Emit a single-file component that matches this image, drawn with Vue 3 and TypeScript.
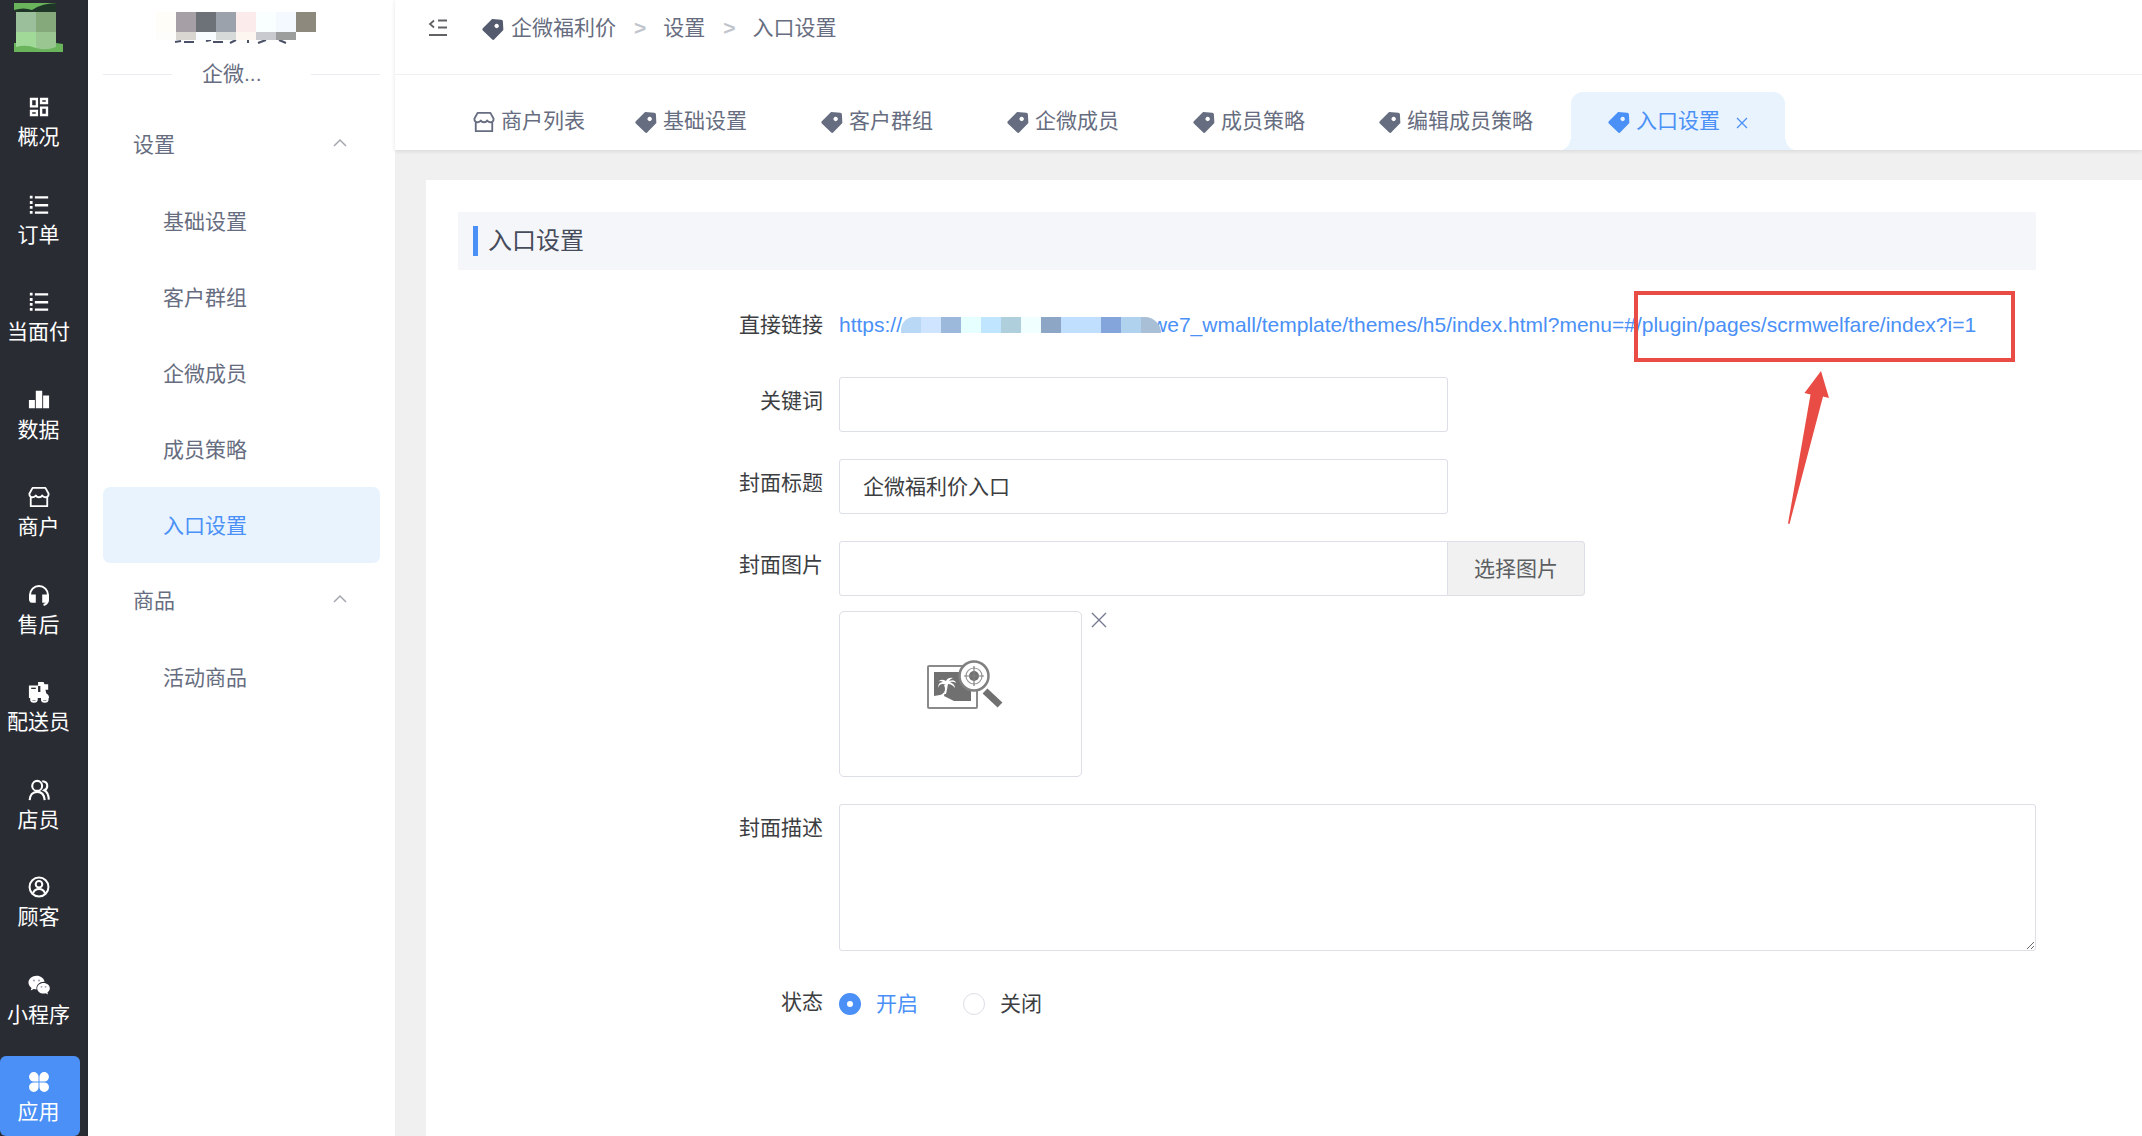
<script setup lang="ts">
import { ref } from 'vue'

type IconName =
  | 'grid' | 'list' | 'bars' | 'shop' | 'headset' | 'rider'
  | 'staff' | 'customer' | 'wechat' | 'apps' | 'tag'

const icons: Record<IconName, string> = {
  grid: '<g fill="none" stroke="currentColor" stroke-width="2.6"><path d="M3.3 3.3h6.4v8H3.3zM14.3 3.3h6.4v4.4h-6.4zM3.3 16.3h6.4v4.4H3.3zM14.3 12.7h6.4v8h-6.4z"/></g>',
  list: '<g fill="currentColor"><path d="M2 2h3v3H2zM2 7.500h3v3.500H2zM2 13h3v3H2zM2 18.500h3v3H2zM7.500 2.500H22V5H7.500zM7.500 11H22v2.500H7.500zM7.500 19H22v2.500H7.500z"/></g>',
  bars: '<g fill="currentColor"><path d="M1 12h6.500v9H1zM8.500 2h7v19h-7zM16.500 7H23v14h-6.500z"/></g>',
  shop: '<g fill="none" stroke="currentColor" stroke-width="2" stroke-linejoin="round"><path d="M5 2h14l3.500 6.500c0 2.500-1.500 3.800-3.600 3.800-1.700 0-2.800-.8-3.400-2-.7 1.200-1.900 2-3.500 2s-2.800-.8-3.500-2c-.6 1.200-1.700 2-3.400 2-2.100 0-3.600-1.300-3.600-3.800zM3 12v10h18V12"/></g>',
  headset: '<path d="M2.200 18v-6a9.800 9.800 0 0 1 19.600 0v5c0 3-1.500 5-4.800 6" fill="none" stroke="currentColor" stroke-width="2.200"/><path d="M1.500 11.500h7v9H4a2.500 2.500 0 0 1-2.500-2.500zM15.500 11.500h7V18a2.500 2.500 0 0 1-2.500 2.500h-4.500z" fill="currentColor"/>',
  rider: '<path d="M1 5h10v7h2.500V5.500H11V1h6l1 2.500h4v6h-3l1 4c2 1 3 2.500 3 5h-1.200a3.600 3.600 0 0 1-7 0H10a3.600 3.600 0 0 1-7 0H1z" fill="currentColor"/><circle cx="6.500" cy="19.500" r="3.200" fill="none" stroke="currentColor" stroke-width="2"/><circle cx="18.300" cy="19.500" r="3.200" fill="none" stroke="currentColor" stroke-width="2"/><path d="M3.500 8h5" stroke="#2a2c34" stroke-width="1.500"/>',
  staff: '<g fill="none" stroke="currentColor" stroke-width="2.300"><circle cx="10" cy="7.500" r="5.400"/><path d="M1.800 23c.3-5.500 3.400-9 8.200-9s7.800 3.500 8.200 9M15.500 2.500c3.500.2 5.500 2.300 5.500 5 0 2.300-1.300 4-3.300 4.800 3 1.600 4.800 5 5 10.200"/></g>',
  customer: '<g fill="none" stroke="currentColor" stroke-width="2.200"><circle cx="12" cy="12" r="10.300"/><circle cx="12" cy="9" r="3.600"/><path d="M5.500 19c1-3.200 3.400-4.700 6.500-4.700s5.500 1.500 6.500 4.700"/></g>',
  wechat: '<path d="M9.500 2C4.500 2 .5 5.300.5 9.400c0 2.400 1.300 4.400 3.300 5.800L3 18l3.300-1.600c1 .3 2 .4 3 .4-.8-4.800 3.500-8.600 8.900-8.300C17.300 4.800 13.700 2 9.500 2z" fill="currentColor"/><path d="M17 9.800c-4 0-7 2.600-7 5.800s3 5.800 7 5.800c.8 0 1.600-.1 2.400-.4l2.400 1.300-.6-2.200c1.600-1.100 2.600-2.700 2.600-4.500 0-3.200-3-5.800-6.800-5.800z" fill="currentColor"/><g fill="#9aa0ad"><circle cx="6.500" cy="7" r="1.100"/><circle cx="12" cy="7" r="1.100"/><circle cx="14.700" cy="14" r="1"/><circle cx="19.200" cy="14" r="1"/></g>',
  apps: '<g fill="currentColor"><path d="M6.300 1.200a5.200 5.200 0 0 1 5.200 5.200v5.100H6.300a5.150 5.150 0 0 1 0-10.300zM17.700 1.200a5.150 5.150 0 0 1 0 10.300h-5.200V6.400a5.200 5.200 0 0 1 5.200-5.200zM6.300 12.500h5.200v5.200a5.200 5.200 0 1 1-5.200-5.200zM12.500 12.500h5.200a5.200 5.200 0 1 1-5.200 5.200z"/></g>',
  tag: '<path fill-rule="evenodd" fill="currentColor" d="M11 1.200 21 1.800q1.700.2 1.800 1.700l.5 9.500-9.800 10.300q-1.300 1.200-2.600 0L.9 13.700q-1-1.200 0-2.400zM16 6.300a2.400 2.400 0 1 0 .01 0z"/>',
}

const navItems: { label: string; icon: IconName; active?: boolean }[] = [
  { label: '概况', icon: 'grid' },
  { label: '订单', icon: 'list' },
  { label: '当面付', icon: 'list' },
  { label: '数据', icon: 'bars' },
  { label: '商户', icon: 'shop' },
  { label: '售后', icon: 'headset' },
  { label: '配送员', icon: 'rider' },
  { label: '店员', icon: 'staff' },
  { label: '顾客', icon: 'customer' },
  { label: '小程序', icon: 'wechat' },
  { label: '应用', icon: 'apps', active: true },
]

const menuGroups = [
  { title: '设置', items: ['基础设置', '客户群组', '企微成员', '成员策略', '入口设置'] },
  { title: '商品', items: ['活动商品'] },
]
const activeMenu = '入口设置'

const tabs: { label: string; icon: IconName; closable: boolean }[] = [
  { label: '商户列表', icon: 'shop', closable: false },
  { label: '基础设置', icon: 'tag', closable: true },
  { label: '客户群组', icon: 'tag', closable: true },
  { label: '企微成员', icon: 'tag', closable: true },
  { label: '成员策略', icon: 'tag', closable: true },
  { label: '编辑成员策略', icon: 'tag', closable: true },
  { label: '入口设置', icon: 'tag', closable: true },
]

const nameMosaic = [
  ['#fffdf8', '#a6a0a6', '#6d7278', '#9ba2ac', '#fbebeb', '#f9ffff', '#f4f8ff', '#8d897d'],
  ['#fdfdfb', '#d9d6d1', '#f9fcff', '#d6dad9', '#fdf6f0', '#c9cacf', '#9c9d9d', '#ffffff'],
]
const linkMosaic = [
  '#b9d8f5', '#cfe5ff', '#9cb9dc', '#e6ffff', '#c0e5ff', '#b0cfdc', '#f0ffff',
  '#8ea6c6', '#c0dfff', '#c0dfff', '#84a5db', '#b0d2ef', '#a9bfd6',
]

const keyword = ref('')
const coverTitle = ref('企微福利价入口')
const coverImage = ref('')
const description = ref('')
const status = ref('on')
</script>

<template>
  <div class="app">
    <nav class="nav">
      <svg class="logo" width="50" height="50" viewBox="0 0 50 50">
        <path d="M0 0h49v8H0z" fill="#6ab45c" />
        <path d="M0 7q10-3 18 0Q28 0 44 0h6v12H0z" fill="#1e3528" />
        <path d="M42 0h8v50h-8z" fill="#2a2c34" />
        <path d="M0 8h2v32H0z" fill="#2a2c34" />
        <path d="M0 40h42l7 1v8H0z" fill="#6ab45c" />
        <path d="M2 9h20v20H2z" fill="#9abf9a" />
        <path d="M22 9h20v20H22z" fill="#86a97c" />
        <path d="M2 29h20v16Q12 41 2 44z" fill="#a0d998" />
        <path d="M22 29h20v15q-10 4-20 1z" fill="#9ac692" />
      </svg>
      <ul class="nav-list">
        <li v-for="item in navItems" :key="item.label">
          <a href="#" class="nav-item" :class="{ active: item.active }">
            <svg width="22" height="22" viewBox="0 0 24 24" v-html="icons[item.icon]"></svg>
            <span>{{ item.label }}</span>
          </a>
        </li>
      </ul>
    </nav>

    <aside class="sidebar">
      <svg class="name-mosaic" width="160" height="32" viewBox="0 0 160 32">
        <g stroke="#4b5268" stroke-width="2" fill="none">
          <path d="M19 30l6-1M28 30h10M50 29l5-1M57 30h10M74 31l6-3M92 27v4M102 31l8-3M123 28l7 3" />
        </g>
        <rect v-for="(c, i) in nameMosaic[0]" :key="'a' + i" :x="i * 20" y="0" width="20" height="20" :fill="c" />
        <rect v-for="(c, i) in nameMosaic[1]" :key="'b' + i" :x="i * 20" y="20" width="20" height="8" :fill="c" />
      </svg>
      <div class="app-name"><span>企微...</span></div>
      <div v-for="group in menuGroups" :key="group.title">
        <button type="button" class="menu-group">
          <span>{{ group.title }}</span>
          <svg width="14" height="10" viewBox="0 0 14 10">
            <path d="M1 8l6-6 6 6" fill="none" stroke="#a4a7b0" stroke-width="1.500" />
          </svg>
        </button>
        <a
          v-for="item in group.items"
          :key="item"
          href="#"
          class="menu-item"
          :class="{ active: item === activeMenu }"
        >{{ item }}</a>
      </div>
    </aside>

    <div class="main">
      <header class="header">
        <div class="crumbs">
          <button type="button" class="fold" aria-label="收起菜单">
            <svg width="20" height="18" viewBox="0 0 20 18">
              <path d="M6 1.500L2 5l4 3.500M10 1.500h9M10 8.500h9M1 16h18" fill="none" stroke="#606266" stroke-width="1.800" />
            </svg>
          </button>
          <svg class="crumb-icon" width="22" height="22" viewBox="0 0 24 24" v-html="icons.tag"></svg>
          <a href="#">企微福利价</a>
          <span class="sep">&gt;</span>
          <a href="#">设置</a>
          <span class="sep">&gt;</span>
          <a href="#">入口设置</a>
        </div>
        <div class="tabs">
          <div
            v-for="(tab, i) in tabs"
            :key="tab.label"
            class="tab"
            :class="{ active: i === tabs.length - 1, closable: tab.closable }"
          >
            <svg width="22" height="22" viewBox="0 0 24 24" v-html="icons[tab.icon]"></svg>
            <a href="#">{{ tab.label }}</a>
            <button v-if="i === tabs.length - 1" type="button" class="tab-close" aria-label="关闭标签">
              <svg width="12" height="12" viewBox="0 0 12 12">
                <path d="M1 1l10 10M11 1L1 11" fill="none" stroke="currentColor" stroke-width="1.300" />
              </svg>
            </button>
          </div>
        </div>
      </header>

      <main class="card">
        <h1 class="title">入口设置</h1>
        <form class="form" @submit.prevent>
          <div class="row">
            <span class="label">直接链接</span>
            <div class="link-line">
              <a href="#" class="link"><span>https://</span><span class="link-mosaic"><i
                v-for="(c, i) in linkMosaic" :key="i" :style="{ background: c }"></i></span><span>we7_wmall/template/themes/h5/index.html?menu=#</span><span class="marked">/plugin/pages/scrmwelfare/index?i=1<span class="mark-box"></span><svg
                class="mark-arrow" width="42" height="156" viewBox="0 0 42 156"><path
                d="M33 1l8 27-6-1.500L1.500 154 0 153.500 22.500 24.500 16.500 23z" fill="#e84c44" /></svg></span></a>
            </div>
          </div>
          <div class="row">
            <label class="label" for="keyword">关键词</label>
            <input id="keyword" v-model="keyword" class="input" type="text" />
          </div>
          <div class="row">
            <label class="label" for="cover-title">封面标题</label>
            <input id="cover-title" v-model="coverTitle" class="input" type="text" />
          </div>
          <div class="row">
            <label class="label" for="cover-image">封面图片</label>
            <div>
              <div class="group">
                <input id="cover-image" v-model="coverImage" class="input" type="text" />
                <button type="button" class="pick">选择图片</button>
              </div>
              <div class="preview-line">
                <div class="preview">
                  <svg width="78" height="52" viewBox="0 0 78 52">
                    <rect x="2" y="6" width="49" height="42" rx="1" fill="#fff" stroke="#8a8a8a" stroke-width="2" />
                    <path d="M8 12h37v29H28l-10-5q1-6 3-9-3 7-7 8l-6 1z" fill="#707070" />
                    <path d="M20 25q-6-3-8 3 0-6 5-6-3-2-5 0 3-4 8-1 2-4 7-3-3 1-4 3 6-2 7 2-3-2-6-1 5 2 5 6-3-4-7-4-1 6-2 10h-2q2-5 0-9z" fill="#fff" />
                    <path d="M59 31l15 14" stroke="#707070" stroke-width="7" stroke-linecap="butt" />
                    <circle cx="48" cy="16" r="14.500" fill="#fff" stroke="#808080" stroke-width="2.500" />
                    <circle cx="48" cy="16" r="8" fill="none" stroke="#999" stroke-width="1.200" />
                    <circle cx="48" cy="16" r="5" fill="#707070" />
                    <path d="M38 16h20M48 6v20" stroke="#808080" stroke-width="1.200" />
                  </svg>
                </div>
                <button type="button" class="remove" aria-label="删除图片">
                  <svg width="16" height="16" viewBox="0 0 16 16">
                    <path d="M1 1l14 14M15 1L1 15" fill="none" stroke="#777b90" stroke-width="1.400" />
                  </svg>
                </button>
              </div>
            </div>
          </div>
          <div class="row">
            <label class="label" for="description">封面描述</label>
            <textarea id="description" v-model="description" class="textarea"></textarea>
          </div>
          <div class="row">
            <span id="status-label" class="label">状态</span>
            <div class="radios" role="radiogroup" aria-labelledby="status-label">
              <label :class="{ checked: status === 'on' }">
                <input v-model="status" type="radio" name="status" value="on" />开启
              </label>
              <label :class="{ checked: status === 'off' }">
                <input v-model="status" type="radio" name="status" value="off" />关闭
              </label>
            </div>
          </div>
        </form>
      </main>
    </div>
  </div>
</template>

<style>
body {
  background: #f0f0f0;
}
</style>

<style scoped>
* {
  box-sizing: border-box;
}
.app {
  display: flex;
  min-height: 100vh;
  font-family: "Liberation Sans", "Noto Sans CJK SC", sans-serif;
  font-size: 21px;
  line-height: 28px;
  color: #676d80;
}
a {
  color: inherit;
  text-decoration: none;
}
button,
input,
textarea {
  font: inherit;
  color: inherit;
}
button {
  border: 0;
  padding: 0;
  background: none;
  cursor: pointer;
}
svg {
  display: block;
  flex: none;
}

.nav {
  flex: none;
  display: flex;
  flex-direction: column;
  width: 88px;
  background: #2a2c34;
  color: #fff;
}
.logo {
  margin: 3px 0 28px 14px;
}
.nav-list {
  flex: 1;
  display: flex;
  flex-direction: column;
  justify-content: space-between;
  margin: 0;
  padding: 0;
  list-style: none;
}
.nav-item {
  display: flex;
  flex-direction: column;
  align-items: center;
  gap: 5px;
  width: 80px;
  height: 80px;
  padding: 15px 3px 0 0;
}
.nav-item.active {
  background: #4a90f7;
  border-radius: 6px;
}
.nav-item span {
  white-space: nowrap;
}

.sidebar {
  flex: none;
  width: 307px;
  padding: 12px 15px 0;
  background: #fff;
  box-shadow: 0 0 3px rgba(0, 0, 0, 0.1);
}
.name-mosaic {
  margin-left: 53px;
}
.app-name {
  display: flex;
  align-items: center;
  gap: 30px;
  height: 30px;
  margin: 15px 0 18px;
}
.app-name::before,
.app-name::after {
  content: "";
  flex: 1;
  height: 1px;
  background: #ececf0;
}
.app-name span {
  width: 79px;
}
.menu-group,
.menu-item {
  display: flex;
  align-items: center;
  width: 100%;
  height: 76px;
  border-radius: 7px;
}
.menu-group {
  justify-content: space-between;
  padding: 0 33px 0 30px;
}
.menu-group svg {
  margin-bottom: 4px;
}
.menu-item {
  padding: 1px 0 0 60px;
}
.menu-item.active {
  background: #e8f3fe;
  color: #4a90f7;
}

.main {
  flex: 1;
  min-width: 0;
  display: flex;
  flex-direction: column;
  background: #f0f0f0;
}
.header {
  background: #fff;
  box-shadow: 0 1px 4px rgba(0, 21, 20, 0.12);
}
.crumbs {
  display: flex;
  align-items: center;
  height: 75px;
  padding: 0 0 19px 33px;
  border-bottom: 1px solid #f0f0f2;
}
.crumb-icon {
  margin: 2px 7px 0 34px;
  color: #545b6e;
}
.sep {
  padding: 0 17px 0 18px;
  font-weight: 700;
  color: #c0c4cc;
}
.tabs {
  display: flex;
  align-items: flex-end;
  height: 75px;
  padding-left: 53px;
}
.tab {
  position: relative;
  display: flex;
  align-items: center;
  gap: 6px;
  height: 58px;
  padding: 0 25px;
  white-space: nowrap;
}
.tab > svg {
  margin-top: 2px;
}
.tab.closable {
  padding-right: 49px;
}
.tab.active {
  margin-left: -11px;
  padding: 0 37px;
  background: #e8f3fe;
  color: #4a90f7;
  border-radius: 12px 12px 0 0;
}
.tab.active::before,
.tab.active::after {
  content: "";
  position: absolute;
  bottom: 0;
  width: 10px;
  height: 14px;
}
.tab.active::before {
  left: -10px;
  background: radial-gradient(ellipse 10px 14px at 0 0, transparent 97%, #e8f3fe 100%);
}
.tab.active::after {
  right: -10px;
  background: radial-gradient(ellipse 10px 14px at 100% 0, transparent 97%, #e8f3fe 100%);
}
.tab-close {
  margin: 4px 0 0 10px;
}

.card {
  flex: 1;
  margin: 30px 0 0 31px;
  padding: 32px 106px 40px 32px;
  background: #fff;
}
.title {
  display: flex;
  align-items: center;
  gap: 10px;
  height: 58px;
  margin: 0 0 31px;
  padding-left: 15px;
  background: #f5f6fa;
  font-size: 24px;
  font-weight: 400;
  color: #464c5b;
}
.title::before {
  content: "";
  width: 5px;
  height: 30px;
  background: #4a90f7;
}
.form {
  display: flex;
  flex-direction: column;
  gap: 27px;
  color: #3c3e42;
}
.row {
  display: grid;
  grid-template-columns: 365px minmax(0, 1fr);
  column-gap: 16px;
}
.label {
  line-height: 48px;
  text-align: right;
}
.link-line {
  height: 49px;
  line-height: 48px;
  white-space: nowrap;
}
.link {
  display: flex;
  color: #4a90f7;
}
.link-mosaic {
  position: relative;
  z-index: 1;
  display: flex;
  width: 260px;
  height: 16px;
  margin: 16px -9px 0 -1px;
  border-radius: 16px 20px 0 0;
  overflow: hidden;
}
.link-mosaic i {
  flex: 1;
}
.marked {
  position: relative;
}
.mark-box {
  position: absolute;
  top: -10px;
  left: -2px;
  width: 381px;
  height: 71px;
  border: 4px solid #e84c44;
}
.mark-arrow {
  position: absolute;
  top: 69px;
  left: 152px;
}
.input {
  display: block;
  width: 609px;
  max-width: 100%;
  height: 55px;
  padding: 0 23px 4px;
  border: 1px solid #dcdee8;
  border-radius: 3px;
  background: #fff;
  outline: none;
}
.group {
  display: flex;
}
.group .input {
  border-radius: 3px 0 0 3px;
}
.pick {
  width: 137px;
  border: 1px solid #dcdee8;
  border-left: 0;
  border-radius: 0 4px 4px 0;
  background: #f1f1f1;
  color: #5c5e62;
}
.preview-line {
  display: flex;
  align-items: flex-start;
  gap: 9px;
  margin-top: 15px;
}
.preview {
  display: flex;
  justify-content: center;
  width: 243px;
  height: 166px;
  padding: 48px 0 0 8px;
  border: 1px solid #dcdee8;
  border-radius: 5px;
}
.remove {
  margin-top: 1px;
}
.textarea {
  display: block;
  width: 100%;
  height: 147px;
  padding: 8px 23px;
  border: 1px solid #dcdee8;
  border-radius: 3px;
  background: #fff;
  outline: none;
  resize: vertical;
}
.radios {
  display: flex;
  gap: 45px;
}
.radios label {
  display: flex;
  align-items: center;
  gap: 15px;
  height: 51px;
}
.radios label.checked {
  color: #4a90f7;
}
.radios input {
  appearance: none;
  width: 22px;
  height: 22px;
  margin: 0;
  border: 1px solid #dcdee8;
  border-radius: 50%;
  background: #fff;
}
.radios input:checked {
  border: 8px solid #4a90f7;
}
</style>
